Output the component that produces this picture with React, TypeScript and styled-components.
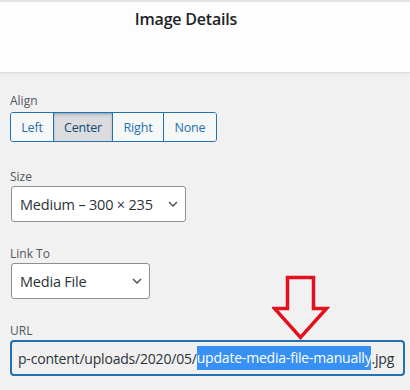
import styled, { createGlobalStyle } from "styled-components";

const Global = createGlobalStyle`
    body {
        margin: 0;
        background: #f1f1f1;
        font-family: "Open Sans", "Noto Sans", sans-serif;
    }
`

const Page = styled.div`
    width: 410px;
    height: 390px;
    overflow: hidden;
    position: relative;
`

const Header = styled.header`
    height: 70px;
    background: #fdfdfd;
    border-top: 2px solid #e2e2e2;
    border-bottom: 1px solid #dcdcde;
    box-shadow: 0 1px 2px rgba(0, 0, 0, 0.05);
    display: flex;
    justify-content: center;
    padding-right: 38px;

    h1 {
        margin: 7px 0 0 0;
        font-size: 16px;
        line-height: 20px;
        font-weight: 600;
        letter-spacing: -0.2px;
        color: #1d2327;
    }
`

const Panel = styled.div`
    display: flex;
    flex-direction: column;
    padding: 19px 10px 0 10px;
`

const Field = styled.div<{ $gap: number }>`
    display: flex;
    flex-direction: column;
    align-items: flex-start;
    margin-bottom: ${p => p.$gap}px;
`

const Label = styled.label<{ $space?: number }>`
    font-size: 12px;
    line-height: 18px;
    color: #50575e;
    margin-bottom: ${p => p.$space || 0}px;
`

const Group = styled.div`
    display: flex;
    border: 1px solid #2271b1;
    border-radius: 3px;
    overflow: hidden;
    height: 28px;
`

const AlignButton = styled.button<{ $width: number; $pressed?: boolean }>`
    width: ${p => p.$width}px;
    border: 0;
    border-left: 1px solid #2271b1;
    background: ${p => (p.$pressed ? "#dcdcde" : "#f6f7f7")};
    color: ${p => (p.$pressed ? "#0a4b78" : "#2271b1")};
    font-family: "Open Sans", "Noto Sans", sans-serif;
    font-size: 12.5px;
    letter-spacing: -0.2px;
    padding: 0;
    box-shadow: ${p => (p.$pressed ? "inset 0 2px 5px -3px #0a4b78" : "none")};

    &:first-child {
        border-left: 0;
    }
`

const Select = styled.div<{ $width: number }>`
    display: flex;
    align-items: center;
    justify-content: space-between;
    box-sizing: border-box;
    width: ${p => p.$width}px;
    height: 36px;
    margin-left: 1px;
    padding: 0 7px 0 8px;
    background: #fff;
    border: 1px solid #8c8f94;
    border-radius: 3px;
    font-size: 14.5px;
    letter-spacing: -0.2px;
    color: #2c3338;
    white-space: nowrap;
`

const Chevron = () => (
    <svg width="10" height="6" viewBox="0 0 10 6">
        <path d="M1 1 L5 5 L9 1" fill="none" stroke="#50575e" strokeWidth="1.5" />
    </svg>
)

const UrlInput = styled.div`
    display: flex;
    align-items: center;
    box-sizing: border-box;
    width: 395px;
    height: 36px;
    padding: 0 0 0 6px;
    background: #f0f0f1;
    border: 2px solid #2271b1;
    border-radius: 4px;
    font-size: 14px;
    letter-spacing: -0.2px;
    color: #2c3338;
    white-space: nowrap;
    overflow: hidden;

    .sel {
        background: #3790f5;
        color: #fff;
        line-height: 24px;
    }
`

const Arrow = styled.svg`
    position: absolute;
    left: 272px;
    top: 275px;
`

export default function App() {
    return (
        <Page>
            <Global />
            <Header>
                <h1>Image Details</h1>
            </Header>
            <Panel>
                <Field $gap={26}>
                    <Label $space={2}>Align</Label>
                    <Group>
                        <AlignButton $width={42}>Left</AlignButton>
                        <AlignButton $width={59} $pressed>Center</AlignButton>
                        <AlignButton $width={51}>Right</AlignButton>
                        <AlignButton $width={53}>None</AlignButton>
                    </Group>
                </Field>
                <Field $gap={23}>
                    <Label>Size</Label>
                    <Select $width={175}>
                        Medium – 300 × 235
                        <Chevron />
                    </Select>
                </Field>
                <Field $gap={23}>
                    <Label>Link To</Label>
                    <Select $width={139}>
                        Media File
                        <Chevron />
                    </Select>
                </Field>
                <Field $gap={0}>
                    <Label>URL</Label>
                    <UrlInput>
                        p-content/uploads/2020/05/<span className="sel">update-media-file-manually</span>.jpg
                    </UrlInput>
                </Field>
            </Panel>
            <Arrow width="58" height="66" viewBox="0 0 58 66">
                <path d="M15.5 2.5 H41.5 V33.5 H54.5 L28.5 62.5 L2.5 33.5 H15.5 Z" fill="none" stroke="#e3101e" strokeWidth="3.5" strokeLinejoin="miter" />
            </Arrow>
        </Page>
    )
}
